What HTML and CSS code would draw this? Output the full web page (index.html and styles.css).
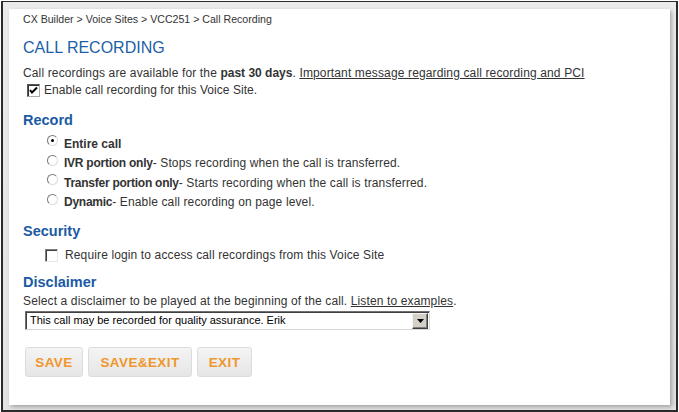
FILE: index.html
```html
<!DOCTYPE html>
<html>
<head>
<meta charset="utf-8">
<link rel="stylesheet" href="styles.css">
</head>
<body>
<div class="frame">
  <div class="panel">
    <div class="crumbs">CX Builder &gt; Voice Sites &gt; VCC251 &gt; Call Recording</div>
    <h1 class="title">CALL RECORDING</h1>
    <p class="intro">Call recordings are available for the <b>past 30 days</b>. <a href="#">Important message regarding call recording and PCI</a></p>
    <div class="check-row enable"><span class="cb checked"><svg width="9" height="9" viewBox="0 0 9 9"><path d="M1 4 L3 6.5 L8 1.5" fill="none" stroke="#000" stroke-width="2"/></svg></span><span>Enable call recording for this Voice Site.</span></div>

    <h2 class="section record">Record</h2>
    <div class="radios">
      <div class="radio-row"><span class="rb on"></span><span><b class="entire">Entire call</b></span></div>
      <div class="radio-row"><span class="rb"></span><span><b>IVR portion only</b>- Stops recording when the call is transferred.</span></div>
      <div class="radio-row"><span class="rb"></span><span><b>Transfer portion only</b>- Starts recording when the call is transferred.</span></div>
      <div class="radio-row"><span class="rb"></span><span><b>Dynamic</b>- Enable call recording on page level.</span></div>
    </div>

    <h2 class="section security">Security</h2>
    <div class="check-row login"><span class="cb"></span><span>Require login to access call recordings from this Voice Site</span></div>

    <h2 class="section disclaimer">Disclaimer</h2>
    <p class="select-note">Select a disclaimer to be played at the beginning of the call. <a href="#">Listen to examples</a>.</p>
    <div class="select">
      <span class="select-value">This call may be recorded for quality assurance. Erik</span>
      <span class="select-btn"><svg width="7" height="4" viewBox="0 0 7 4"><path d="M0 0 H7 L3.5 4 Z" fill="#000"/></svg></span>
    </div>

    <div class="buttons">
      <button class="btn btn-save">SAVE</button>
      <button class="btn btn-save-exit">SAVE&amp;EXIT</button>
      <button class="btn btn-exit">EXIT</button>
    </div>
  </div>
</div>
</body>
</html>
```

FILE: styles.css
```css
html, body {
  margin: 0;
  padding: 0;
  background: #ffffff;
}
body {
  padding: 1px 1px 0 1px;
  font-family: "Liberation Sans", Arial, sans-serif;
  color: #333333;
}
.frame {
  box-sizing: border-box;
  width: 677px;
  height: 411px;
  border-style: solid;
  border-color: #2b2b2b;
  border-width: 1px 2px 2px 2px;
  background: linear-gradient(#ebebeb, #e2e2e2);
  padding: 7px 6px 5px 6px;
  display: flex;
}
.panel {
  flex: 1;
  background: #ffffff;
  box-shadow: 2px 2px 4px rgba(0, 0, 0, 0.28);
  padding: 3px 14px 0 14px;
  display: flex;
  flex-direction: column;
  align-items: flex-start;
}
.crumbs {
  font-size: 10.6px;
  line-height: 14px;
  color: #333;
}
.title {
  margin: 12px 0 0 0;
  font-size: 16px;
  line-height: 20px;
  font-weight: normal;
  color: #1d5fa6;
}
.intro {
  margin: 7px 0 0 0;
  font-size: 12px;
  line-height: 16px;
  letter-spacing: 0.14px;
}
.intro b {
  letter-spacing: 0;
}
a {
  color: #333;
  text-decoration: underline;
}
.check-row {
  display: flex;
  align-items: center;
  font-size: 12px;
  line-height: 16px;
  letter-spacing: 0.13px;
}
.enable {
  margin-top: 1px;
  padding-left: 4px;
  letter-spacing: 0.04px;
}
.enable .cb {
  margin-right: 4px;
}
.cb {
  box-sizing: border-box;
  width: 13px;
  height: 13px;
  background: #fff;
  border: 1px solid;
  border-color: #808080 #e8e8e8 #e8e8e8 #808080;
  box-shadow: inset 1px 1px 0 #404040;
  display: inline-flex;
  align-items: center;
  justify-content: center;
  flex: none;
}
.cb.checked {
  border-color: #555 #aaa #aaa #555;
  box-shadow: inset 1px 1px 0 #333;
}
.section {
  margin: 0;
  font-size: 14.5px;
  line-height: 18px;
  font-weight: bold;
  color: #1a5aa3;
}
.record { margin-top: 13px; }
.security { margin-top: 10px; }
.disclaimer { margin-top: 9px; }
.radios {
  margin-top: 5px;
  padding-left: 24px;
}
.radio-row {
  height: 19.5px;
  display: flex;
  align-items: center;
  font-size: 12px;
  line-height: 16px;
  letter-spacing: 0.13px;
}
.radio-row b {
  letter-spacing: -0.25px;
}
.radio-row b.entire {
  letter-spacing: 0;
}
.rb {
  box-sizing: border-box;
  width: 11px;
  height: 11px;
  border-radius: 50%;
  border: 1px solid;
  border-color: #7a7a7a #dcdcdc #dcdcdc #7a7a7a;
  background: #fff;
  margin-right: 6px;
  position: relative;
  top: -3px;
  flex: none;
}
.rb.on::after {
  content: "";
  position: absolute;
  left: 3px;
  top: 3px;
  width: 3px;
  height: 3px;
  border-radius: 50%;
  background: #000;
}
.login {
  margin-top: 6px;
  line-height: 18px;
  padding-left: 22px;
}
.login .cb {
  margin-right: 7px;
}
.select-note {
  margin: 2px 0 0 0;
  font-size: 12px;
  line-height: 16px;
  letter-spacing: 0.13px;
}
.select {
  box-sizing: border-box;
  margin: 2px 0 0 2px;
  width: 405px;
  height: 19px;
  border: 1px solid;
  border-color: #707070 #d8d8d8 #d8d8d8 #707070;
  box-shadow: inset 1px 1px 0 #404040;
  display: flex;
  align-items: center;
  padding: 1px 1px 1px 4px;
  background: #fff;
}
.select-value {
  flex: 1;
  font-size: 11px;
  line-height: 15px;
  color: #000;
}
.select-btn {
  box-sizing: border-box;
  width: 16px;
  height: 16px;
  background: #d4d0c8;
  border: 1px solid;
  border-color: #f4f4f4 #404040 #404040 #f4f4f4;
  box-shadow: inset -1px -1px 0 #808080;
  display: flex;
  align-items: center;
  justify-content: center;
}
.buttons {
  margin: 17px 0 0 2px;
  display: flex;
  gap: 5px;
}
.btn {
  box-sizing: border-box;
  height: 30px;
  padding: 0;
  border: 1px solid #dcdcdc;
  border-radius: 3px;
  background: linear-gradient(#f4f4f4, #e6e6e6);
  color: #f0962d;
  font-family: "Liberation Sans", Arial, sans-serif;
  font-size: 13.5px;
  font-weight: bold;
  letter-spacing: 0.4px;
  text-align: center;
  cursor: pointer;
}
.btn-save { width: 58px; }
.btn-save-exit { width: 104px; }
.btn-exit { width: 55px; }
```
